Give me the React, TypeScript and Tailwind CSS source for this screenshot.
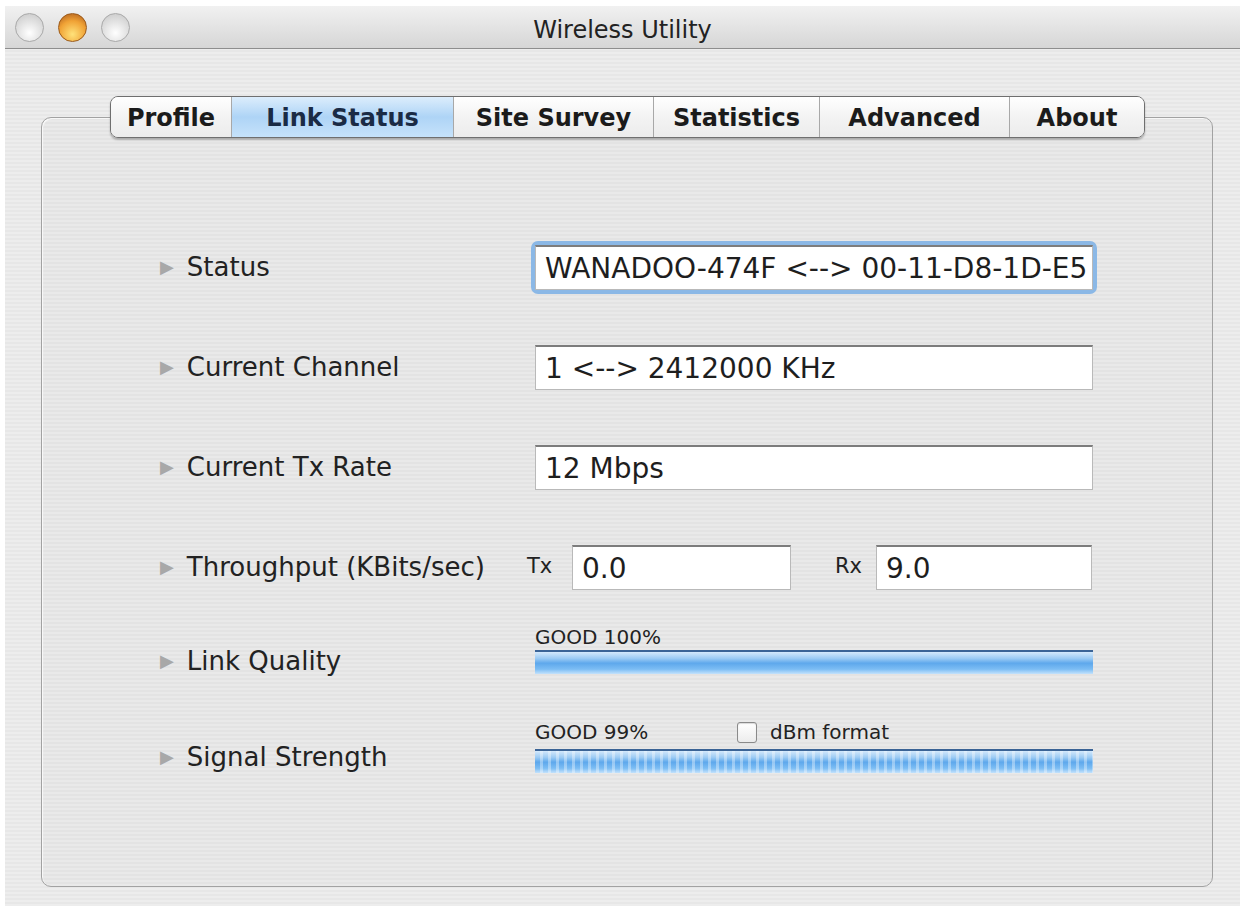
import React from 'react';

const tabs = [
    { name: 'Profile', w: 'w-[120px]' },
    { name: 'Link Status', w: 'w-[222px]', active: true },
    { name: 'Site Survey', w: 'w-[200px]' },
    { name: 'Statistics', w: 'w-[166px]' },
    { name: 'Advanced', w: 'w-[190px]' },
    { name: 'About', w: 'w-[135px]' }
];

const stripes =
    'bg-[repeating-linear-gradient(0deg,#ededed_0px,#ededed_2px,#e7e7e7_2px,#e7e7e7_4px)]';

const Arrow = () => <span className="mr-[13px] text-[18px] leading-none text-[#a8a8a8]">▶</span>;

const Label = ({ text }: { text: string }) => (
    <div className="flex items-center text-[26px] text-[#222]">
        <Arrow />
        {text}
    </div>
);

const Field = ({ value, className = '' }: { value: string; className?: string }) => (
    <div
        className={`flex h-[45px] items-center overflow-hidden whitespace-nowrap border border-[#b9b9b9] border-t-[#7d7d7d] border-t-2 bg-white pl-[9px] pt-[3px] text-[28px] text-[#1e1e1e] ${className}`}
    >
        {value}
    </div>
);

const Bar = ({ dotted }: { dotted?: boolean }) => (
    <div className="relative h-[24px] w-[558px] bg-[linear-gradient(to_bottom,#3b6496_0px,#3b6496_2px,#d4e9fc_2px,#9ccbf4_35%,#5ea8ec_55%,#7cbdf4_80%,#c3e2fc_100%)]">
        {dotted && (
            <div className="absolute inset-x-0 top-[2px] bottom-0 bg-[repeating-linear-gradient(90deg,rgba(255,255,255,0)_0px,rgba(255,255,255,0)_5px,rgba(255,255,255,0.35)_5px,rgba(255,255,255,0.35)_8px)]" />
        )}
    </div>
);

const TitleBar = () => (
    <div className="relative flex h-[43px] items-center justify-center border-b border-[#8e8e8e] bg-[linear-gradient(to_bottom,#f1f1f1,#d6d6d6)] pt-[5px]">
        <div className="absolute left-[10px] top-[7px] flex gap-[14px]">
            <span className="h-[29px] w-[29px] rounded-full border border-[#a9a9a9] bg-[radial-gradient(circle_at_50%_70%,#ffffff,#dcdcdc_60%,#c4c4c4)]" />
            <span className="h-[29px] w-[29px] rounded-full border border-[#9b5a1a] bg-[radial-gradient(circle_at_50%_75%,#ffe27a,#f0a235_55%,#a8561b)]" />
            <span className="h-[29px] w-[29px] rounded-full border border-[#a9a9a9] bg-[radial-gradient(circle_at_50%_70%,#ffffff,#dcdcdc_60%,#c4c4c4)]" />
        </div>
        <span className="text-[24px] text-[#222]">Wireless Utility</span>
    </div>
);

const Tabs = () => (
    <div className="relative z-10 flex pl-[69px]">
        <div className="flex h-[42px] overflow-hidden rounded-[8px] border border-[#6f6f6f] shadow-[0_2px_2px_rgba(0,0,0,0.25)]">
            {tabs.map((t, i) => (
                <div
                    key={t.name}
                    className={`flex items-center justify-center pt-[2px] text-[24px] font-bold ${t.w} ${
                        i > 0 ? 'border-l border-[#a8a8a8]' : ''
                    } ${
                        t.active
                            ? 'bg-[linear-gradient(to_bottom,#dcedfc,#aed4f6_50%,#c6e2fa)] text-[#1a2b45]'
                            : 'bg-[linear-gradient(to_bottom,#ffffff,#f3f3f3_50%,#ececec)] text-[#1b1b1b]'
                    }`}
                >
                    {t.name}
                </div>
            ))}
        </div>
    </div>
);

const LinkStatus = () => (
    <div className="flex flex-col pl-[118px] pt-[99px]">
        <div className="grid h-[100px] grid-cols-[375px_558px] items-center">
            <Label text="Status" />
            <div className="rounded-[3px] shadow-[0_0_0_4px_#8bb8e6]">
                <Field
                    value="WANADOO-474F <--> 00-11-D8-1D-E5"
                    className="h-[43px] bg-[#d2e5f8]"
                />
            </div>
        </div>
        <div className="grid h-[100px] grid-cols-[375px_558px] items-center">
            <Label text="Current Channel" />
            <Field value="1 <--> 2412000 KHz" />
        </div>
        <div className="grid h-[100px] grid-cols-[375px_558px] items-center">
            <Label text="Current Tx Rate" />
            <Field value="12 Mbps" />
        </div>
        <div className="grid h-[100px] grid-cols-[367px_566px] items-center">
            <Label text="Throughput (KBits/sec)" />
            <div className="flex items-center text-[21px] text-[#222]">
                <span className="w-[45px]">Tx</span>
                <Field value="0.0" className="w-[219px]" />
                <span className="ml-[44px] w-[41px]">Rx</span>
                <Field value="9.0" className="w-[216px]" />
            </div>
        </div>
        <div className="grid h-[88px] grid-cols-[375px_558px] items-center">
            <Label text="Link Quality" />
            <div className="flex flex-col self-start pt-[8px]">
                <span className="h-[25px] text-[20px] leading-[25px] text-[#222]">GOOD 100%</span>
                <Bar />
            </div>
        </div>
        <div className="grid h-[104px] grid-cols-[375px_558px] items-center">
            <Label text="Signal Strength" />
            <div className="flex flex-col self-start pt-[13px]">
                <div className="flex h-[28px] items-center text-[20px] text-[#222]">
                    <span className="w-[202px]">GOOD 99%</span>
                    <span className="mr-[13px] h-[21px] w-[20px] rounded-[3px] border border-[#8a8a8a] bg-[linear-gradient(to_bottom,#ffffff,#ececec)] shadow-[inset_0_1px_1px_rgba(0,0,0,0.15)]" />
                    <span>dBm format</span>
                </div>
                <div className="mt-[3px]">
                    <Bar dotted />
                </div>
            </div>
        </div>
    </div>
);

export default function App() {
    return (
        <div className="h-[907px] w-[1240px] overflow-hidden bg-white pl-[5px] pt-[6px] font-['DejaVu_Sans',sans-serif]">
            <div className="flex h-[900px] flex-col">
                <TitleBar />
                <div className={`flex-1 px-[36px] pt-[47px] ${stripes}`}>
                    <Tabs />
                    <div className="-mt-[21px] h-[770px] w-[1172px] rounded-[10px] border border-[#a2a2a2] bg-[repeating-linear-gradient(0deg,#e9e9e9_0px,#e9e9e9_2px,#e3e3e3_2px,#e3e3e3_4px)] shadow-[inset_1px_1px_1px_rgba(255,255,255,0.8)]">
                        <LinkStatus />
                    </div>
                </div>
            </div>
        </div>
    );
}
